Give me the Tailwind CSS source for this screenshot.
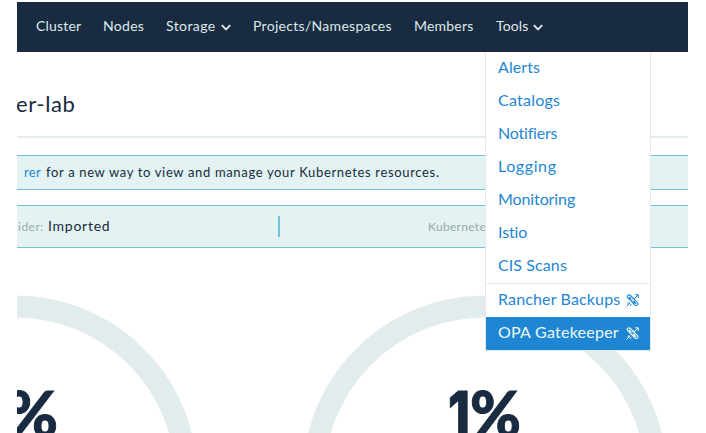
<!DOCTYPE html>
<html lang="en">
<head>
<meta charset="utf-8">
<title>Cluster</title>
<script src="https://cdn.jsdelivr.net/npm/@tailwindcss/browser@4"></script>
</head>
<body class="bg-white font-['Lato',sans-serif] text-[#182b40]">
<svg class="hidden">
  <symbol id="chev" viewBox="0 0 10 7"><path d="M.8 1.2 5 5.4 9.2 1.2" fill="none" stroke="currentColor" stroke-width="1.9"/></symbol>
  <symbol id="rocket" viewBox="0 0 13 13"><g fill="none" stroke="currentColor"><path d="M2.2 1C1 1.2.9 2.7 1.7 3.5l6.8 7.2c.8.9 2.7 1 3.2.3.5-.8.2-2-.7-2.9L4.5 1.5C3.8.8 3 .7 2.2 1Z" stroke-width="1.1"/><path d="m3 3 2 2m2 2 3 3" stroke-width="1.6"/><path d="M.5 12.5 4 9M8 5l4-4M9 .8h3.3V4M1.5 9.5l2-1M4 12l1.3-2M5 6.5l2-2M7 8.5l2-2" stroke-width="1"/></g></symbol>
</svg>
<div class="relative ml-[17px] h-[433px] w-[671px] overflow-hidden pt-0.5 whitespace-nowrap">
  <nav class="flex h-[50px] items-center bg-[#182b40] pb-[3px] pl-[19px] text-[14px] text-[#dfeaeb]">
    <a class="w-[67px] tracking-[0.2px]">Cluster</a>
    <a class="w-[63px] tracking-[0.3px]">Nodes</a>
    <a class="flex w-[87px] items-center gap-[5px] tracking-[0.4px]"><span class="w-[50px]">Storage</span><svg class="mt-1 h-[7px] w-[10px]"><use href="#chev"/></svg></a>
    <a class="w-[161px] tracking-[0.3px]">Projects/Namespaces</a>
    <a class="w-[82px] tracking-[0.2px]">Members</a>
    <a class="flex items-center gap-[5px] tracking-[0.12px]"><span class="w-[32px]">Tools</span><svg class="mt-1 h-[7px] w-[10px]"><use href="#chev"/></svg></a>
  </nav>
  <header class="flex h-[86px] items-center border-b-2 border-[#e5ecec] pt-[18px]">
    <h1 class="-ml-px text-[22px] tracking-[0.6px]">er-lab</h1>
  </header>
  <p class="mt-[17px] flex h-[35px] items-center border-y border-[#74c0d6] bg-[#e3f2f2] pl-[7px] text-[13px]"><a class="w-[22px] tracking-[0.3px] text-[#1e86d3]">rer</a><span class="tracking-[0.66px]">for a new way to view and manage your Kubernetes resources.</span></p>
  <section class="mt-[15px] flex h-[43px] items-center border-y border-[#74c0d6] bg-[#e3f2f2]">
    <div class="flex h-[21px] w-[263px] items-center border-r-2 border-[#74c0d6] pl-px"><span class="w-[30px] text-[12px] tracking-[0.5px] text-[#98aaa9]">ider:</span><span class="pb-0.5 text-[14px] tracking-[0.75px]">Imported</span></div>
    <span class="ml-[148px] text-[12px] tracking-[0.3px] text-[#98aaa9]">Kubernete</span>
  </section>
  <section class="h-[185px]">
    <svg class="h-[185px] w-[671px]" viewBox="17 248 671 185">
      <g fill="none" stroke="#e3ecec" stroke-width="22"><circle cx="15" cy="478" r="171.5"/><circle cx="485" cy="478" r="171.5"/></g>
      <g fill="#182b40" stroke="#182b40" stroke-width="1" font-size="63" font-weight="900"><text x="6" y="437" textLength="52" lengthAdjust="spacingAndGlyphs">%</text><text class="font-['Inter',sans-serif]" x="448" y="437" textLength="22" lengthAdjust="spacingAndGlyphs" font-weight="800">1</text><text x="470" y="437" textLength="51" lengthAdjust="spacingAndGlyphs">%</text></g>
    </svg>
  </section>
  <ul class="absolute top-[52px] left-[468px] w-[166px] border border-t-0 border-[#e3e9e9] bg-white text-[16px] leading-[30px] text-[#1e86d3] *:h-[33px] *:pl-3">
    <li class="tracking-[0.1px]">Alerts</li>
    <li class="tracking-[0.25px]">Catalogs</li>
    <li class="tracking-[-0.2px]">Notifiers</li>
    <li class="tracking-[0.6px]">Logging</li>
    <li class="tracking-[-0.1px]">Monitoring</li>
    <li class="tracking-[-0.1px]">Istio</li>
    <li class="tracking-[0.1px]">CIS Scans</li>
    <li class="box-content flex items-center border-t border-[#e3e9e9]"><span class="w-[128px] pb-[3px] tracking-[0.15px]">Rancher Backups</span><svg class="h-[13px] w-[13px]"><use href="#rocket"/></svg></li>
    <li class="flex items-center bg-[#1e86d3] text-[#eef8f8]"><span class="w-[128px] pb-[3px] tracking-[0.25px]">OPA Gatekeeper</span><svg class="h-[13px] w-[13px]"><use href="#rocket"/></svg></li>
  </ul>
</div>
</body>
</html>
